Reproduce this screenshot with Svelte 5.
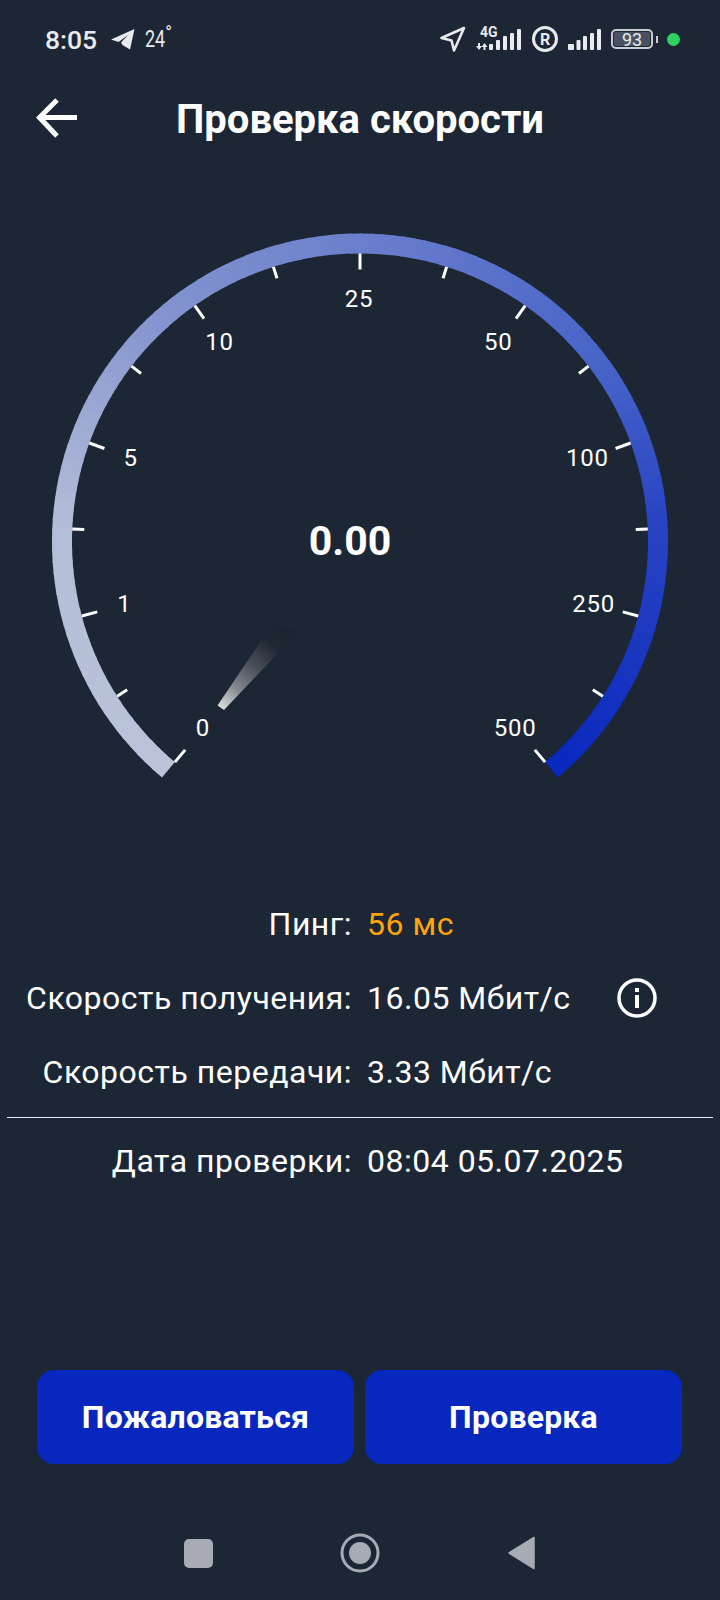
<script>
  const cx = 360;
  const cy = 541.5;
  const rOuter = 308;
  const arcWidth = 20;
  const r = rOuter - arcWidth / 2;

  const labels = ['0', '', '1', '', '5', '', '10', '', '25', '', '50', '', '100', '', '250', '', '500'];

  // arc colour along the sweep, t = 0..1
  const stops = [
    [0, [186, 195, 216]],
    [0.19, [179, 189, 215]],
    [0.35, [132, 148, 207]],
    [0.5, [106, 127, 204]],
    [0.7, [70, 98, 200]],
    [0.81, [40, 67, 196]],
    [0.9, [26, 55, 192]],
    [1, [8, 39, 191]]
  ];

  function colorAt(t) {
    let i = 0;
    while (i < stops.length - 2 && t > stops[i + 1][0]) i++;
    const [t0, c0] = stops[i];
    const [t1, c1] = stops[i + 1];
    const k = (t - t0) / (t1 - t0);
    const mix = c0.map((v, n) => Math.round(v + (c1[n] - v) * k));
    return `rgb(${mix.join(',')})`;
  }

  function polar(radius, deg) {
    // deg: clockwise from straight down
    const a = (deg * Math.PI) / 180;
    return { x: cx - radius * Math.sin(a), y: cy + radius * Math.cos(a) };
  }

  const segments = [];
  const segCount = 140;
  for (let i = 0; i < segCount; i++) {
    const from = polar(r, 40 + i * 2);
    const to = polar(r, Math.min(40 + (i + 1) * 2 + 0.4, 320));
    segments.push({
      d: `M${from.x} ${from.y} A${r} ${r} 0 0 1 ${to.x} ${to.y}`,
      color: colorAt((i + 0.5) / segCount)
    });
  }

  const ticks = labels.map((text, i) => {
    const deg = 40 + i * 17.5;
    const inner = rOuter - arcWidth;
    return {
      text,
      from: polar(inner, deg),
      to: polar(inner - (text ? 16 : 12), deg),
      at: polar(243, deg)
    };
  });

  const rows = [
    { label: 'Пинг:', value: '56 мс', accent: true },
    { label: 'Скорость получения:', value: '16.05 Мбит/с', info: true },
    { label: 'Скорость передачи:', value: '3.33 Мбит/с' }
  ];
</script>

<div class="screen">
  <div class="status">
    <div class="status-left">
      <span class="time">8:05</span>
      <svg class="tg" width="26" height="22" viewBox="0 0 26 22">
        <path d="M1 11.5 24.5 1 20 21.5 12.5 17 11 14.5 18 7 8.5 14Z" fill="#e8eaee" />
      </svg>
      <span class="temp">24</span><span class="deg">°</span>
    </div>
    <div class="status-right">
      <svg width="28" height="28" viewBox="0 0 28 28" fill="none">
        <path d="M2.5 13 25 3 15 25.5 12.5 15.5Z" stroke="#e8eaee" stroke-width="2.6" stroke-linejoin="round" />
      </svg>
      <div class="net">
        <span class="net-4g">4G</span>
        <svg width="46" height="21" viewBox="0 0 46 21">
          <path d="M2 14h2v3h2l-3 4-3-4h2ZM7.5 21h2v-3h2l-3-4-3 4h2Z" fill="#e8eaee" />
          <rect x="13" y="15" width="4" height="6" rx="1" fill="#e8eaee" />
          <rect x="20" y="11" width="4" height="10" rx="1" fill="#e8eaee" />
          <rect x="27" y="7" width="4" height="14" rx="1" fill="#e8eaee" />
          <rect x="34" y="4" width="4" height="17" rx="1" fill="#e8eaee" />
          <rect x="41" y="0" width="4" height="21" rx="1" fill="#e8eaee" />
        </svg>
      </div>
      <span class="reg">R</span>
      <svg width="33" height="21" viewBox="0 0 33 21">
        <rect x="0" y="15" width="6" height="6" rx="1" fill="#e8eaee" />
        <rect x="8.5" y="11" width="4" height="10" rx="1" fill="#e8eaee" />
        <rect x="15" y="7" width="4" height="14" rx="1" fill="#e8eaee" />
        <rect x="22" y="4" width="4" height="17" rx="1" fill="#e8eaee" />
        <rect x="29" y="0" width="4" height="21" rx="1" fill="#e8eaee" />
      </svg>
      <div class="battery">
        <span class="battery-body">93</span>
        <span class="battery-cap"></span>
      </div>
      <span class="dot"></span>
    </div>
  </div>

  <header>
    <svg class="back" width="42" height="42" viewBox="0 0 42 42" fill="none">
      <path d="M41 19.5H4M21 2 3.5 19.5 21 38" stroke="#fff" stroke-width="5" />
    </svg>
    <h1>Проверка скорости</h1>
  </header>

  <svg class="gauge" width="720" height="640" viewBox="0 160 720 640">
    <defs>
      <linearGradient id="needle" gradientUnits="userSpaceOnUse" x1="221" y1="708" x2="285" y2="628">
        <stop offset="0" stop-color="#dcdcdc" />
        <stop offset="0.25" stop-color="#83868c" />
        <stop offset="0.5" stop-color="#4c515c" />
        <stop offset="0.8" stop-color="#1f2733" />
        <stop offset="1" stop-color="#1b2431" />
      </linearGradient>
    </defs>
    {#each segments as seg}
      <path d={seg.d} fill="none" stroke={seg.color} stroke-width={arcWidth} />
    {/each}
    {#each ticks as tick}
      <line x1={tick.from.x} y1={tick.from.y} x2={tick.to.x} y2={tick.to.y} stroke="#fff" stroke-width="3" />
      {#if tick.text}
        <text class="tick-label" x={tick.at.x - 1} y={tick.at.y} text-anchor="middle" dominant-baseline="central">{tick.text}</text>
      {/if}
    {/each}
    <polygon points="217.5,705.5 224,710 298,632 273,623" fill="url(#needle)" />
    <text class="speed" x="350" y="541" text-anchor="middle" dominant-baseline="central">0.00</text>
  </svg>

  <div class="rows">
    {#each rows as row}
      <div class="row">
        <span class="label">{row.label}</span>
        <span class="value" class:accent={row.accent}>{row.value}</span>
        {#if row.info}
          <svg class="info" width="40" height="40" viewBox="0 0 40 40" fill="none">
            <circle cx="20" cy="20" r="18" stroke="#fff" stroke-width="3.5" />
            <rect x="18" y="17" width="4" height="13" fill="#fff" />
            <rect x="18" y="10" width="4" height="4" fill="#fff" />
          </svg>
        {/if}
      </div>
    {/each}
  </div>

  <div class="divider"></div>

  <div class="row date">
    <span class="label">Дата проверки:</span>
    <span class="value">08:04 05.07.2025</span>
  </div>

  <div class="buttons">
    <button type="button">Пожаловаться</button>
    <button type="button">Проверка</button>
  </div>

  <div class="nav">
    <span class="nav-square"></span>
    <svg width="40" height="40" viewBox="0 0 40 40" fill="none">
      <circle cx="20" cy="20" r="18" stroke="#a8abb3" stroke-width="3" />
      <circle cx="20" cy="20" r="11" fill="#a8abb3" />
    </svg>
    <svg width="28" height="34" viewBox="0 0 28 34">
      <path d="M1 17 26 1.5V32.5Z" fill="#a8abb3" stroke="#a8abb3" stroke-width="1.5" stroke-linejoin="round" />
    </svg>
  </div>
</div>

<style>
  :global(body) {
    margin: 0;
    background: #1c2635;
  }

  .screen {
    width: 720px;
    height: 1600px;
    background: #1c2635;
    color: #fff;
    font-family: Roboto, sans-serif;
    display: flex;
    flex-direction: column;
    overflow: hidden;
  }

  .status {
    height: 80px;
    box-sizing: border-box;
    padding: 0 40px 2px 45px;
    display: flex;
    justify-content: space-between;
    align-items: center;
    color: #e8eaee;
  }

  .status-left,
  .status-right {
    display: flex;
    align-items: center;
  }

  .time {
    font-size: 26.5px;
    font-weight: 500;
    margin-right: 13px;
  }

  .temp {
    font-size: 23px;
    width: 20px;
    margin-left: 9px;
    transform: scaleX(0.78);
    transform-origin: left;
  }

  .deg {
    font-size: 18px;
    margin: -14px 0 0 0;
  }

  .status-right {
    gap: 10px;
  }

  .net {
    position: relative;
    width: 46px;
    height: 21px;
    margin-left: -1px;
  }

  .net-4g {
    position: absolute;
    left: 4px;
    top: -2px;
    font-size: 14px;
    line-height: 11px;
    font-weight: 700;
  }

  .net svg {
    display: block;
  }

  .reg {
    box-sizing: border-box;
    width: 26px;
    height: 26px;
    border: 3px solid #e8eaee;
    border-radius: 50%;
    font-size: 16px;
    font-weight: 700;
    display: flex;
    align-items: center;
    justify-content: center;
  }

  .battery {
    display: flex;
    align-items: center;
    gap: 3px;
  }

  .battery-body {
    box-sizing: border-box;
    width: 42px;
    height: 20px;
    border: 2px solid #c9ccd2;
    border-radius: 5px;
    background: #4a5262;
    background-clip: content-box;
    padding: 1px;
    font-size: 18px;
    line-height: 15px;
    text-align: center;
    color: #e8eaee;
  }

  .battery-cap {
    width: 2px;
    height: 7px;
    background: #c9ccd2;
  }

  .dot {
    width: 13px;
    height: 13px;
    border-radius: 50%;
    background: #2fd161;
    margin-left: -1px;
  }

  header {
    position: relative;
    height: 80px;
    display: flex;
    align-items: center;
    justify-content: center;
  }

  .back {
    position: absolute;
    left: 36px;
    top: 18px;
  }

  h1 {
    margin: 0;
    font-size: 40px;
    font-weight: 700;
    line-height: 80px;
  }

  .gauge {
    display: block;
    flex: none;
  }

  .tick-label {
    fill: #fff;
    font-size: 24px;
    letter-spacing: 0.8px;
  }

  .speed {
    fill: #fff;
    font-size: 41px;
    font-weight: 700;
  }

  .rows {
    display: flex;
    flex-direction: column;
    gap: 37px;
    margin-top: 105px;
  }

  .row {
    display: grid;
    grid-template-columns: 352px auto auto;
    justify-content: start;
    column-gap: 15px;
    height: 37px;
    align-items: center;
    font-size: 32px;
    letter-spacing: 0.5px;
    white-space: nowrap;
  }

  .label {
    text-align: right;
  }

  .accent {
    color: #ffa30f;
  }

  .info {
    margin: -2px 0 -2px 31px;
  }

  .divider {
    height: 1px;
    background: #e6e8ec;
    margin: 27px 7px 0;
  }

  .date {
    margin-top: 24px;
  }

  .buttons {
    display: flex;
    gap: 11px;
    margin: 191px 38px 0 37px;
  }

  button {
    flex: 1;
    height: 94px;
    border: 0;
    border-radius: 17px;
    background: #0827bf;
    color: #fff;
    font: 700 32px Roboto, sans-serif;
    letter-spacing: 0.2px;
  }

  .nav {
    display: grid;
    grid-template-columns: 40px 40px 40px;
    justify-content: center;
    justify-items: center;
    align-items: center;
    column-gap: 122px;
    margin-top: 69px;
  }

  .nav-square {
    width: 29px;
    height: 29px;
    border-radius: 5px;
    background: #a8abb3;
  }
</style>
